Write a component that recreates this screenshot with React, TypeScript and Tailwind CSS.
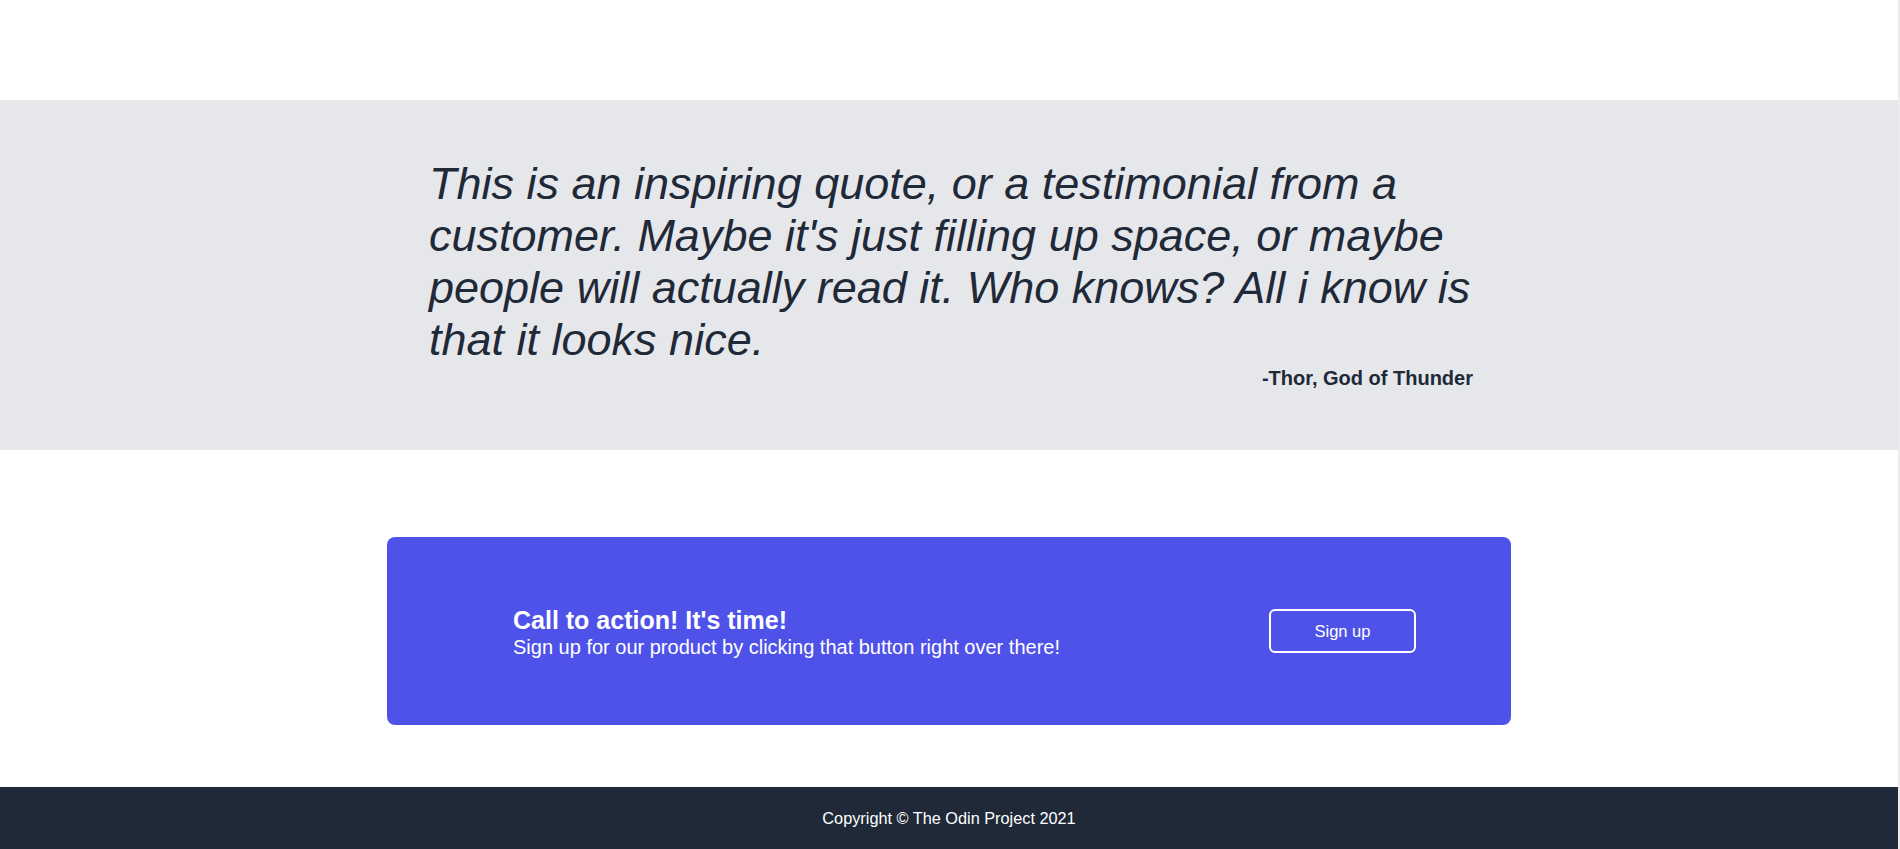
import React from "react";

export default function App() {
  return (
    <div
      className="flex h-[849px] w-full overflow-hidden bg-white"
      style={{ fontFamily: '"Liberation Sans", Arial, Helvetica, sans-serif' }}
    >
      <main className="flex flex-1 flex-col">
        <div className="h-[100px] bg-white" />
        <section className="flex h-[350px] justify-center bg-[#e5e7eb] pl-[4px] pt-[58px] text-[#1f2937]">
          <div className="flex w-[1044px] flex-col">
            <p className="text-[45px] italic leading-[52px]">
              This is an inspiring quote, or a testimonial from a customer. Maybe it's just filling up
              space, or maybe people will actually read it. Who knows? All i know is that it looks nice.
            </p>
            <p className="pt-[1px] text-right text-[20px] font-bold leading-[23px]">-Thor, God of Thunder</p>
          </div>
        </section>
        <section className="flex flex-1 justify-center bg-white pt-[87px]">
          <div className="flex h-[188px] w-[1124px] items-center justify-between rounded-lg bg-[#4f52e9] pl-[126px] pr-[95px] text-white">
            <div className="flex flex-col">
              <h2 className="text-[25px] font-bold leading-8">Call to action! It's time!</h2>
              <p className="text-[20px] leading-[22px]">
                Sign up for our product by clicking that button right over there!
              </p>
            </div>
            <button className="flex h-[44px] w-[147px] items-center justify-center rounded-md border-2 border-white text-[16.5px] text-white">
              Sign up
            </button>
          </div>
        </section>
        <footer className="flex h-[62px] items-center justify-center bg-[#1f2937] text-[16.3px] text-white">
          Copyright © The Odin Project 2021
        </footer>
      </main>
      <div className="w-[2px] bg-[#ececec]" />
    </div>
  );
}
